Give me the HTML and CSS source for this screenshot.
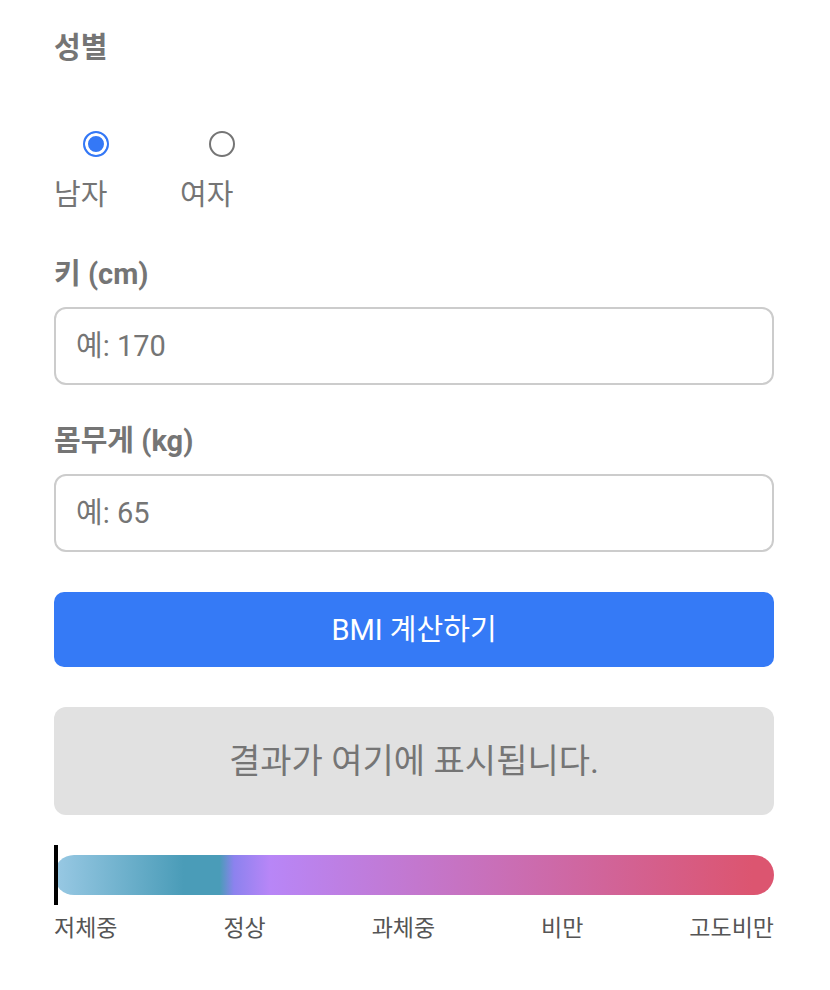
FILE: index.html
```html
<!DOCTYPE html>
<html lang="ko">
<head>
<meta charset="UTF-8" />
<meta name="viewport" content="width=device-width, initial-scale=1" />
<title>BMI 계산기</title>
<link rel="stylesheet" href="styles.css">
</head>
<body>

<form class="bmi-form" id="bmiForm">
  <fieldset class="gender">
    <legend>성별</legend>
    <div class="gender-options">
      <label><input type="radio" name="gender" value="male" checked>남자</label>
      <label><input type="radio" name="gender" value="female">여자</label>
    </div>
  </fieldset>

  <div class="field">
    <label for="height">키 (cm)</label>
    <input type="number" id="height" placeholder="예: 170">
  </div>

  <div class="field">
    <label for="weight">몸무게 (kg)</label>
    <input type="number" id="weight" placeholder="예: 65">
  </div>

  <button type="submit" class="calc-btn">BMI 계산하기</button>

  <div class="result">결과가 여기에 표시됩니다.</div>

  <div class="bar">
    <div class="bar-track"></div>
    <div class="bar-marker"></div>
  </div>
  <div class="bar-labels">
    <span>저체중</span>
    <span>정상</span>
    <span>과체중</span>
    <span>비만</span>
    <span>고도비만</span>
  </div>
</form>

</body>
</html>
```

FILE: styles.css
```css
* {
  box-sizing: border-box;
}
body {
  margin: 0;
  background: #fff;
  color: #757575;
  font-family: Roboto, "Noto Sans CJK KR", sans-serif;
  font-size: 29px;
  line-height: 40px;
}
.bmi-form {
  padding: 28px 56px 40px 54px;
}
.gender {
  margin: 0 0 39px;
  padding: 0;
  border: none;
}
.gender legend {
  padding: 0;
  font-weight: bold;
}
.gender-options {
  display: flex;
  gap: 42px;
  padding-top: 63px;
}
.gender-options label {
  width: 84px;
}
.gender-options input {
  appearance: none;
  display: block;
  width: 26px;
  height: 26px;
  margin: 0 auto 18px;
  border: 2px solid #757575;
  border-radius: 50%;
  background: #fff;
}
.gender-options input:checked {
  border-color: #3478f6;
  background: #3478f6;
  box-shadow: inset 0 0 0 3px #fff;
}
.field {
  margin-bottom: 36px;
}
.field label {
  display: block;
  margin-bottom: 13px;
  font-weight: bold;
}
.field input {
  display: block;
  width: 100%;
  height: 78px;
  padding: 0 20px;
  border: 2px solid #ccc;
  border-radius: 12px;
  background: #fff;
  color: #757575;
  font: inherit;
}
.field input::placeholder {
  color: #757575;
}
.calc-btn {
  display: block;
  width: 100%;
  height: 75px;
  margin: 40px 0;
  border: none;
  border-radius: 10px;
  background: #357af6;
  color: #fff;
  font: inherit;
  cursor: pointer;
}
.result {
  padding: 34px 20px;
  border-radius: 12px;
  background: #e1e1e1;
  font-size: 34px;
  text-align: center;
}
.bar {
  position: relative;
  margin-top: 30px;
  padding: 10px 0;
}
.bar-track {
  height: 40px;
  border-radius: 20px;
  background: linear-gradient(to right, #99c9e4 0%, #4a9cb8 18%, #4a9cb8 23%, #8c82ee 25%, #b886f7 30%, #dc5570 97%);
}
.bar-marker {
  position: absolute;
  top: 0;
  left: 0;
  width: 4px;
  height: 100%;
  background: #000;
}
.bar-labels {
  display: flex;
  justify-content: space-between;
  padding-top: 4px;
  color: #555;
  font-size: 23px;
}
```
